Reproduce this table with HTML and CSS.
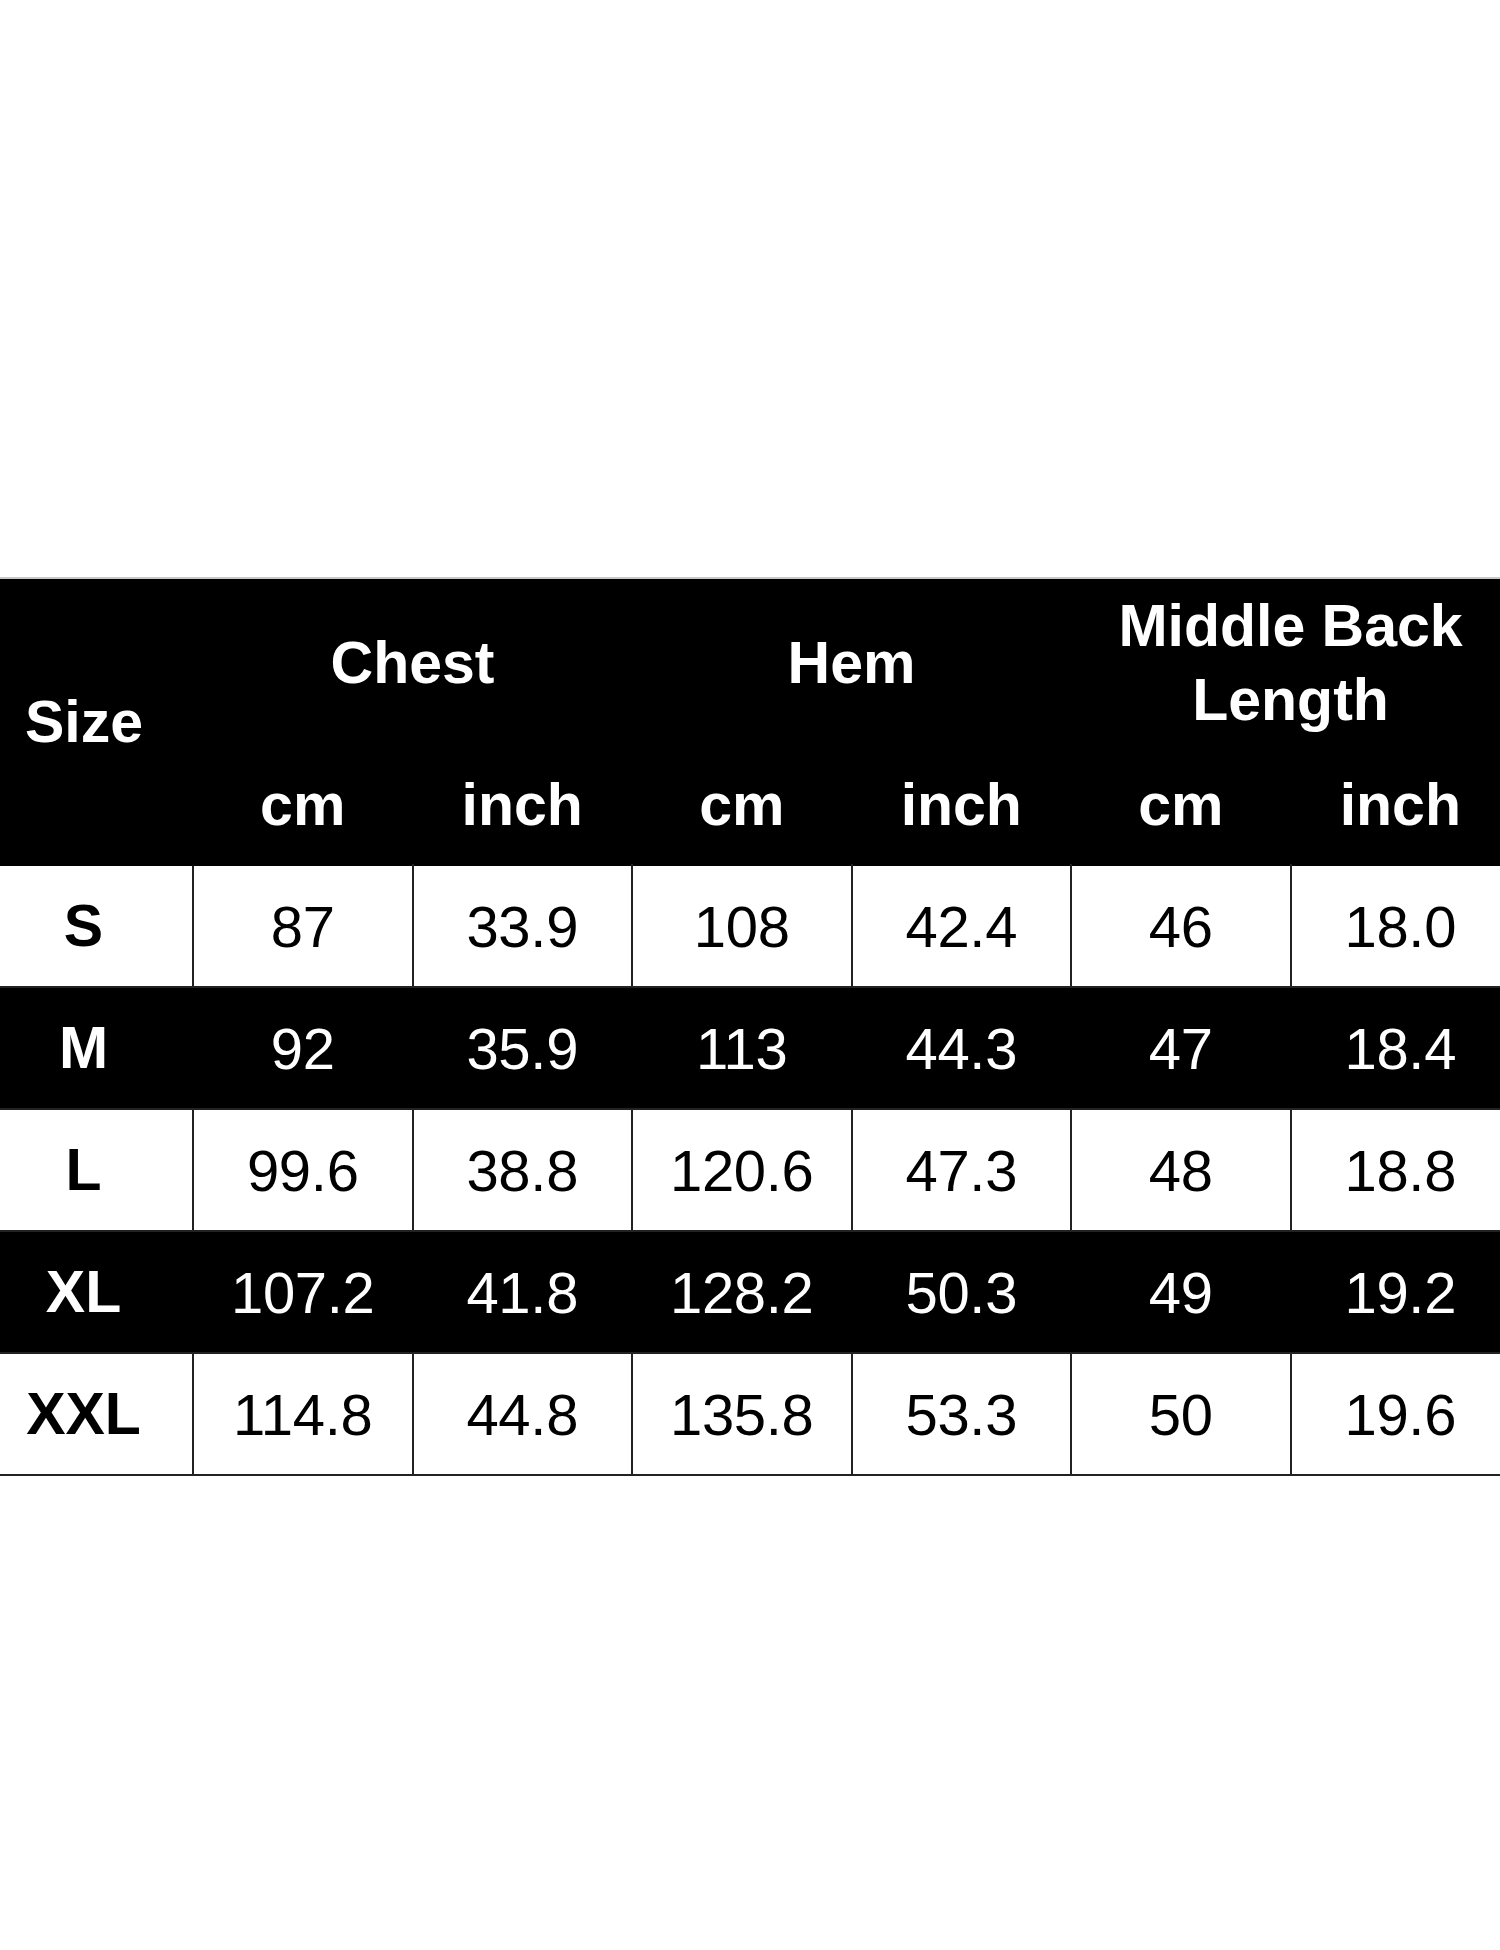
FILE: index.html
```html
<!DOCTYPE html>
<html>
<head>
<meta charset="utf-8">
<link rel="stylesheet" href="styles.css">
</head>
<body>
<div class="page">
  <table class="chart">
    <colgroup>
      <col class="c-size">
      <col class="c-val"><col class="c-val"><col class="c-val"><col class="c-val"><col class="c-val"><col class="c-val">
    </colgroup>
    <thead>
      <tr class="group">
        <th rowspan="2" class="size-head">Size</th>
        <th colspan="2" class="one-line">Chest</th>
        <th colspan="2" class="one-line">Hem</th>
        <th colspan="2" class="two-line">Middle Back<br>Length</th>
      </tr>
      <tr class="units">
        <th>cm</th><th>inch</th><th>cm</th><th>inch</th><th>cm</th><th>inch</th>
      </tr>
    </thead>
    <tbody>
      <tr class="light"><th>S</th><td>87</td><td>33.9</td><td>108</td><td>42.4</td><td>46</td><td>18.0</td></tr>
      <tr class="dark"><th>M</th><td>92</td><td>35.9</td><td>113</td><td>44.3</td><td>47</td><td>18.4</td></tr>
      <tr class="light"><th>L</th><td>99.6</td><td>38.8</td><td>120.6</td><td>47.3</td><td>48</td><td>18.8</td></tr>
      <tr class="dark"><th>XL</th><td>107.2</td><td>41.8</td><td>128.2</td><td>50.3</td><td>49</td><td>19.2</td></tr>
      <tr class="light"><th>XXL</th><td>114.8</td><td>44.8</td><td>135.8</td><td>53.3</td><td>50</td><td>19.6</td></tr>
    </tbody>
  </table>
</div>
</body>
</html>
```

FILE: styles.css
```css
html, body {
  margin: 0;
  padding: 0;
  background: #ffffff;
}

.page {
  width: 1500px;
  height: 1950px;
  overflow: hidden;
  padding-top: 577px;
  box-sizing: border-box;
}

.chart {
  margin-left: -25px;
  border-collapse: collapse;
  table-layout: fixed;
  width: 1535px;
  font-family: "Liberation Sans", Arial, sans-serif;
  border-top: 2px solid #c8c8c8;
}

.c-size { width: 218px; }
.c-val { width: 219.5px; }

.chart th,
.chart td {
  padding: 0;
  text-align: center;
  vertical-align: middle;
}

thead {
  background: #000000;
  color: #ffffff;
}

thead th {
  font-weight: bold;
  font-size: 59px;
}

.group { height: 168px; }
.units { height: 119px; }

.one-line { padding-bottom: 6px; }
.two-line { line-height: 74px; padding-bottom: 8px; }

tbody tr { height: 122px; }

tbody th {
  font-weight: bold;
  font-size: 59px;
  border-top: 2px solid #333;
  border-bottom: 2px solid #222;
}

tbody td {
  font-weight: normal;
  font-size: 58px;
  letter-spacing: -0.3px;
  border: 2px solid #222;
}

tbody tr:first-child th,
tbody tr:first-child td {
  border-top-color: #000;
}

.light { background: #ffffff; color: #000000; }
.dark { background: #000000; color: #ffffff; }

.dark td {
  border-left-color: #000;
  border-right-color: #000;
}
```
